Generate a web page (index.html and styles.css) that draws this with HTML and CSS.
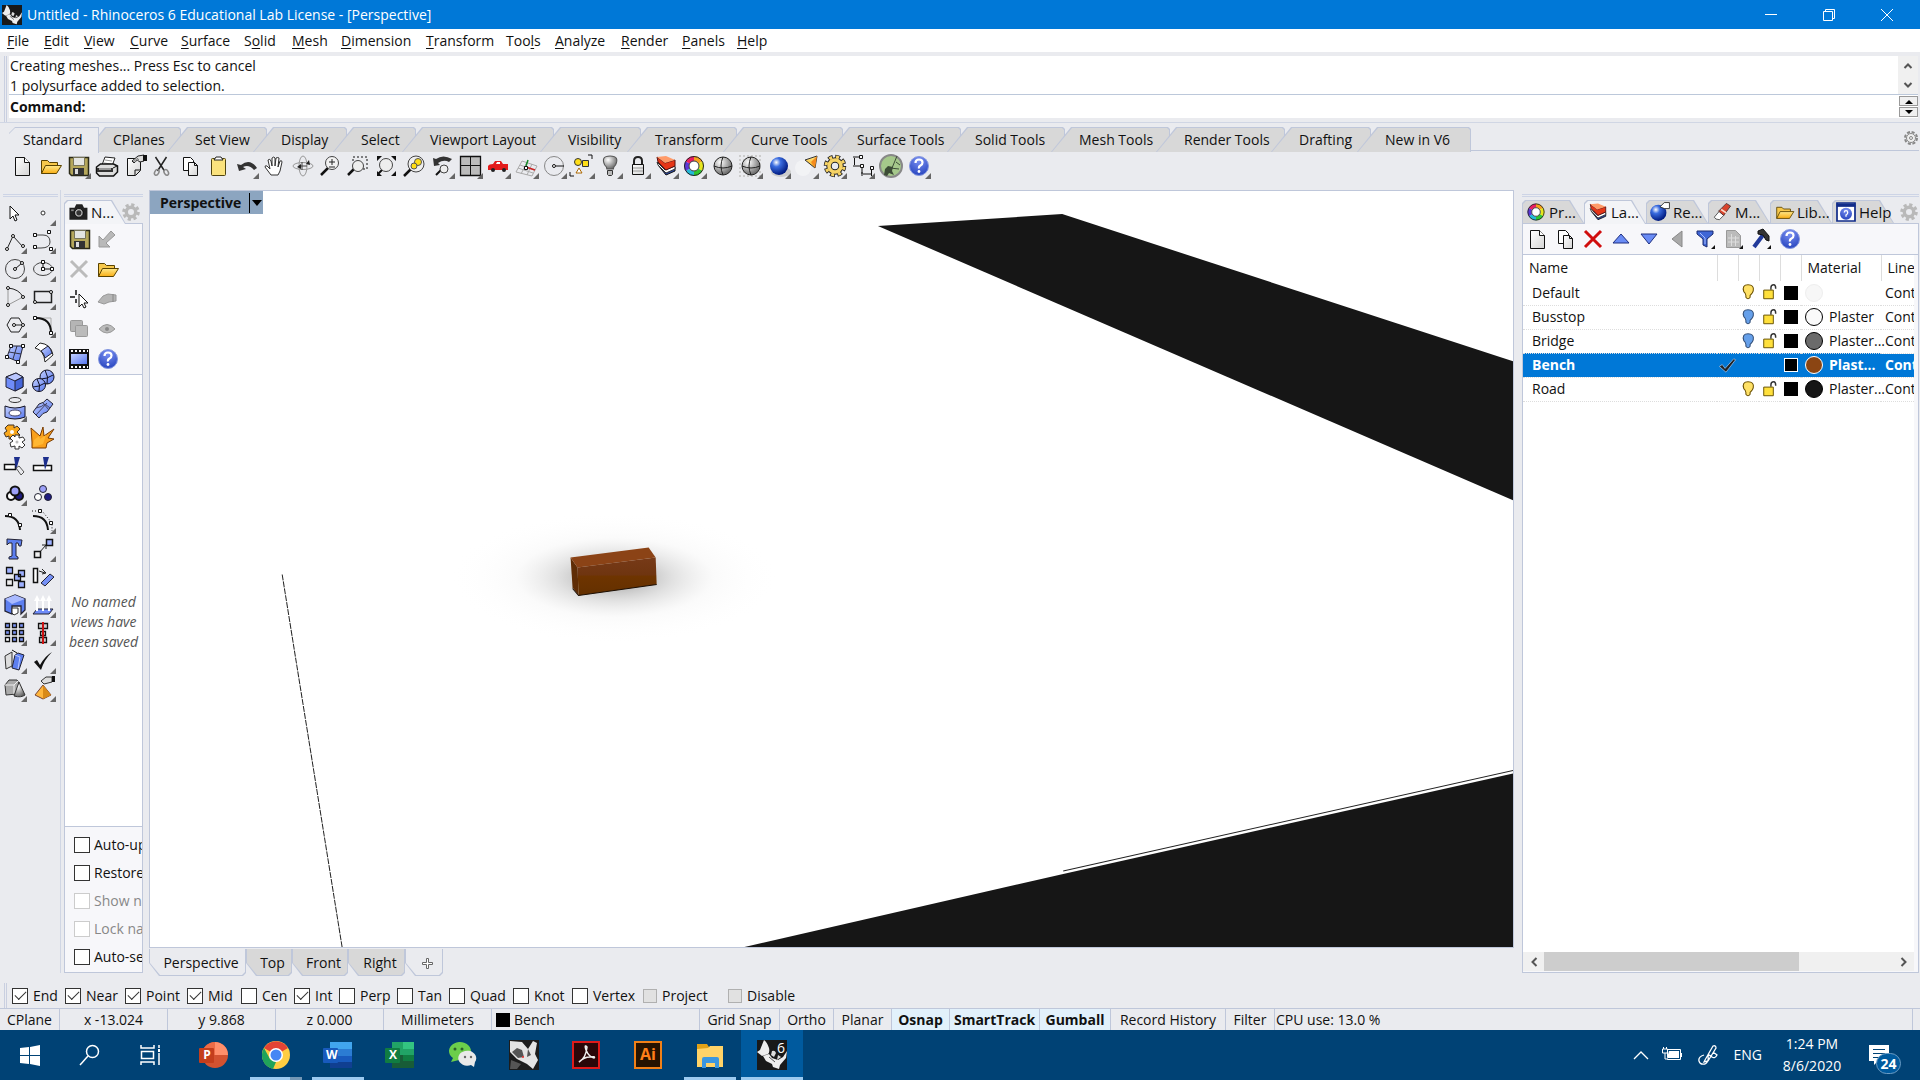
FILE: index.html
```html
<!DOCTYPE html>
<html lang="en">
<head>
<meta charset="utf-8">
<title>Untitled - Rhinoceros 6 Educational Lab License - [Perspective]</title>
<link rel="stylesheet" href="styles.css">
</head>
<body>
<svg class="sprite" width="0" height="0" aria-hidden="true">
<defs>
<linearGradient id="gPage" x1="0" y1="0" x2="1" y2="1"><stop offset="0" stop-color="#fff"/><stop offset="1" stop-color="#d4d4d4"/></linearGradient>
<linearGradient id="gFold" x1="0" y1="0" x2="0" y2="1"><stop offset="0" stop-color="#ffe98a"/><stop offset="1" stop-color="#f9ae14"/></linearGradient>
<linearGradient id="gBlue" x1="0" y1="0" x2="1" y2="1"><stop offset="0" stop-color="#c3d0ff"/><stop offset="1" stop-color="#5878ee"/></linearGradient>
<radialGradient id="gHelp" cx=".5" cy=".2" r=".9"><stop offset="0" stop-color="#7c92f4"/><stop offset="1" stop-color="#1e3cb8"/></radialGradient>
<radialGradient id="gBall" cx=".35" cy=".3" r=".7"><stop offset="0" stop-color="#fff"/><stop offset=".35" stop-color="#3a6ce0"/><stop offset="1" stop-color="#001a80"/></radialGradient>
<radialGradient id="gGrey" cx=".35" cy=".3" r=".8"><stop offset="0" stop-color="#fff"/><stop offset="1" stop-color="#555"/></radialGradient>
<radialGradient id="gShade"><stop offset="0" stop-color="#000" stop-opacity=".75"/><stop offset=".35" stop-color="#555" stop-opacity=".32"/><stop offset=".6" stop-color="#999" stop-opacity=".08"/><stop offset="1" stop-color="#fff" stop-opacity="0"/></radialGradient>
<linearGradient id="gFront" x1="0" y1="0" x2="0" y2="1"><stop offset="0" stop-color="#773a18"/><stop offset=".45" stop-color="#6f3510"/><stop offset=".5" stop-color="#6e3400"/><stop offset="1" stop-color="#633000"/></linearGradient>
</defs>
<symbol id="new" viewBox="0 0 28 28"><path d="M7.500 5.500h9l5 5v13h-14z" fill="url(#gPage)" stroke="#111"/><path d="M16.500 5.500v5h5" fill="#fff" stroke="#111"/></symbol>
<symbol id="open" viewBox="0 0 28 28"><path d="M5.500 21.500v-13h6l2 2h8v3" fill="#f7c84b" stroke="#5a4300"/><path d="M5.500 21.500l4-8h16l-5 8z" fill="url(#gFold)" stroke="#5a4300"/></symbol>
<symbol id="save" viewBox="0 0 28 28"><path d="M5.500 5.500h19v18h-17l-2-2z" fill="#b5a75b" stroke="#2b2a18" stroke-width="1.500"/><path d="M9.500 5.500h11v8h-11z" fill="#e4e5e1" stroke="#77745a"/><path d="M9 16h11v7H9z" fill="#333"/><path d="M11 17h3v5h-3z" fill="#ddd"/></symbol>
<symbol id="print" viewBox="0 0 28 28"><path d="M10 13l3-8 10 1-3 8z" fill="#fff" stroke="#222"/><path d="M13 8l7 1M12 11l7 1" stroke="#999"/><path d="M4.500 15l4-3h13l4 2v6l-4 4h-14l-3-3z" fill="#ddd" stroke="#111" stroke-width="1.500"/><path d="M5 16h16v4H5z" fill="#333"/><path d="M7 17h12" stroke="#fff"/><path d="M21 16l4-2" stroke="#111"/></symbol>
<symbol id="props" viewBox="0 0 28 28"><path d="M7.500 6.500h13v12l-5 5h-8z" fill="url(#gPage)" stroke="#111"/><path d="M20 18h-5v5" fill="none" stroke="#111"/><path d="M12 9l6-5 6-1v6l-4 1-3-2-3 3z" fill="#ddd" stroke="#222"/><path d="M23 3h4v6h-4z" fill="#111"/><path d="M13 10l5-4M15 10l4-3" stroke="#777"/></symbol>
<symbol id="cut" viewBox="0 0 28 28"><path d="M7.500 5l9 14M18.500 5l-9 14" stroke="#222" stroke-width="1.500"/><ellipse cx="9" cy="20.500" rx="2" ry="3" transform="rotate(30 9 20)" fill="none" stroke="#888" stroke-width="1.500"/><ellipse cx="18" cy="20.500" rx="2" ry="3" transform="rotate(-30 18 20)" fill="none" stroke="#888" stroke-width="1.500"/></symbol>
<symbol id="copy" viewBox="0 0 28 28"><path d="M7.500 5.500h7l3 3v10h-10z" fill="#fff" stroke="#111"/><path d="M12.500 10.500h6l3 3v10h-9z" fill="url(#gPage)" stroke="#111"/><path d="M18.500 10.500v3h3" fill="none" stroke="#111"/></symbol>
<symbol id="paste" viewBox="0 0 28 28"><rect x="7.500" y="6.500" width="14" height="17" rx="1" fill="#fae27d" stroke="#4f4410"/><path d="M10 8l2-3h5l2 3z" fill="#fff" stroke="#222"/></symbol>
<symbol id="undo" viewBox="0 0 28 28"><path d="M5 12l2 7 7-2-3-2q6-3 11 3l3-2q-7-10-16-3z" fill="#333"/></symbol>
<symbol id="pan" viewBox="0 0 28 28"><path d="M11 23l-6-8q0-2 2-1l3 3-2-9q2-2 3 1l1 5v-8q2-2 3 0v8l1-8q2-1 3 0l-1 9 2-6q2-1 2 1l-2 9-2 4z" fill="#fff" stroke="#333"/></symbol>
<symbol id="orbit" viewBox="0 0 28 28"><ellipse cx="15" cy="14" rx="10" ry="3.500" fill="none" stroke="#999"/><ellipse cx="15" cy="14" rx="4" ry="10" fill="none" stroke="#999"/><path d="M14 10v8M11 14h8" stroke="#444"/><path d="M18 12l3-4 1 5zM13 12v5l-4-2z" fill="#222"/></symbol>
<symbol id="zoom" viewBox="0 0 28 28"><path d="M5 23l7-7" stroke="#111" stroke-width="2.500"/><circle cx="16" cy="11" r="6.500" fill="#f2f2f2" stroke="#444"/><path d="M13 10h6M16 7v6M13 15h6" stroke="#222"/></symbol>
<symbol id="zoomwin" viewBox="0 0 28 28"><path d="M4 23l6-6" stroke="#111" stroke-width="2.500"/><circle cx="14" cy="14" r="5.500" fill="#eee" stroke="#444"/><path d="M9 9V5h14v12h-4" fill="none" stroke="#111" stroke-dasharray="2 2"/></symbol>
<symbol id="zoomext" viewBox="0 0 28 28"><path d="M6 22l5-5" stroke="#111" stroke-width="2"/><circle cx="14" cy="13" r="6.500" fill="#eee" stroke="#444"/><path d="M5 4h5l-5 5zM24 4h-5l5 5zM24 24h-5l5-5zM5 24v-5l5 5z" fill="#111"/></symbol>
<symbol id="zoomsel" viewBox="0 0 28 28"><path d="M4 24l7-7" stroke="#111" stroke-width="2.500"/><circle cx="16" cy="12" r="8" fill="#eee" stroke="#444"/><circle cx="18" cy="10" r="3.500" fill="#ffde17" stroke="#555"/><circle cx="14" cy="14" r="3" fill="#ffde17" stroke="#555"/></symbol>
<symbol id="undoview" viewBox="0 0 28 28"><path d="M5 6l1 8 6-1-2-2q6-4 11-1l3-3q-9-5-16 0z" fill="#333"/><path d="M8 23l5-5" stroke="#111" stroke-width="2"/><circle cx="16" cy="17" r="4" fill="#eee" stroke="#444"/></symbol>
<symbol id="fourview" viewBox="0 0 28 28"><path d="M4.500 4.500h20v19h-20z" fill="#bbb" stroke="#111" stroke-width="1.300"/><path d="M14.500 4v19M4 13.500h20" stroke="#111"/></symbol>
<symbol id="car" viewBox="0 0 28 28"><path d="M4 14q1-2 5-2l2-3h6l2 3h5v6H4z" fill="#e31b1b"/><path d="M12 12l1-2h3v2z" fill="#fff"/><circle cx="9" cy="18" r="2" fill="#222"/><circle cx="20" cy="18" r="2" fill="#222"/></symbol>
<symbol id="cplane" viewBox="0 0 28 28"><path d="M4 20L10 9l15 5-5 10zM6 16l15 5M8 13l14 5M9 22l6-12M15 23l5-11" fill="none" stroke="#aaa"/><path d="M14 15l9 3" stroke="#c22" stroke-width="1.500"/><path d="M14 14l2-6" stroke="#182" stroke-width="1.500"/><path d="M12.500 14.500h3v3h-3z" fill="#fff" stroke="#111"/></symbol>
<symbol id="circledim" viewBox="0 0 28 28"><circle cx="14" cy="14" r="9.500" fill="none" stroke="#888"/><circle cx="14" cy="14" r="1.500" fill="#fff" stroke="#111"/><path d="M16 14h8" stroke="#111"/></symbol>
<symbol id="select" viewBox="0 0 28 28"><circle cx="10" cy="10" r="3.500" fill="#ffde17" stroke="#333"/><path d="M14.500 8.500h6v6h-6z" fill="#ffde17" stroke="#333"/><path d="M8 21l3-5 3 5z" fill="#fff" stroke="#a60"/><path d="M20 3h4v4M2 20v4h4" fill="none" stroke="#111"/></symbol>
<symbol id="bulb" viewBox="0 0 28 28"><path d="M11 17q0-2-2-4-4-9 5-9t5 9q-2 2-2 4z" fill="url(#gGrey)" stroke="#555" transform="translate(-1 0) scale(1.080 1)"/><path d="M11.500 18.500h5v4l-1 1h-3l-1-1z" fill="#bbb" stroke="#333"/></symbol>
<symbol id="lock" viewBox="0 0 28 28"><path d="M10 13V9q0-4 4-4t4 4v4" fill="none" stroke="#222" stroke-width="2"/><path d="M8.500 12.500h11v10h-11z" fill="url(#gPage)" stroke="#111"/><path d="M9 16h10M9 19h10" stroke="#999"/></symbol>
<symbol id="layers" viewBox="0 0 28 28"><path d="M6 13l8 10 9-4v-4z" fill="#2947a8" stroke="#111"/><path d="M5 10l8 8 10-4v3l-9 4-8-8z" fill="#fff" stroke="#333"/><path d="M5 5l8 6 10-3v6l-9 4-8-8z" fill="#e53617" stroke="#511"/><path d="M5 5l9-1 9 4-10 3z" fill="#ff9a68"/></symbol>
<symbol id="wheel" viewBox="0 0 28 28"><g fill="none" stroke-width="4.500"><path d="M14 6.500a7.500 7.500 0 0 1 6.500 3.800" stroke="#f6a11c"/><path d="M20.500 10.300a7.500 7.500 0 0 1 0 7.500" stroke="#e7e71c"/><path d="M20.500 17.800A7.500 7.500 0 0 1 14 21.500" stroke="#2fc52f"/><path d="M14 21.500a7.500 7.500 0 0 1-6.500-3.700" stroke="#23b9d8"/><path d="M7.500 17.800a7.500 7.500 0 0 1 0-7.500" stroke="#5b36d8"/><path d="M7.500 10.300A7.500 7.500 0 0 1 14 6.500" stroke="#e81e62"/></g><circle cx="14" cy="14" r="9.500" fill="none" stroke="#222"/><circle cx="14" cy="14" r="5" fill="#fff" stroke="#333"/></symbol>
<symbol id="globe" viewBox="0 0 28 28"><circle cx="15" cy="14" r="9" fill="url(#gGrey)" stroke="#222"/><path d="M6 14q9 4 18 0M15 5q-4 9 0 18" fill="none" stroke="#222"/></symbol>
<symbol id="globedot" viewBox="0 0 28 28"><path d="M3 4h23M3 8h23M3 12h23M3 16h23M3 20h23M3 24h23" stroke="#ccc" stroke-dasharray="2 2" stroke-width="2"/><circle cx="15" cy="14" r="9" fill="url(#gGrey)" stroke="#222"/><path d="M6 14q9 4 18 0M15 5q-4 9 0 18" fill="none" stroke="#222"/></symbol>
<symbol id="ball" viewBox="0 0 28 28"><ellipse cx="17" cy="20" rx="10" ry="5" fill="#ccc"/><circle cx="15" cy="14" r="9" fill="url(#gBall)"/></symbol>
<symbol id="spot" viewBox="0 0 28 28"><circle cx="11" cy="16" r="8" fill="#fff" opacity=".4"/><path d="M13 8l12-4-2 12z" fill="url(#gFold)" stroke="#333"/><path d="M25 4l-2 12-4-6z" fill="#f58b1c"/></symbol>
<symbol id="gearY" viewBox="0 0 28 28"><g fill="none"><circle cx="15" cy="14" r="9" stroke="#222" stroke-width="4.500" stroke-dasharray="4.600 2.470"/><circle cx="15" cy="14" r="6" stroke="#222" stroke-width="5.500"/><circle cx="15" cy="14" r="9" stroke="#f6d365" stroke-width="3" stroke-dasharray="3 4.070" stroke-dashoffset="-.8"/><circle cx="15" cy="14" r="6" stroke="#f6d365" stroke-width="3.500"/></g></symbol>
<symbol id="gear" viewBox="0 0 28 28"><circle cx="14" cy="14" r="8.500" fill="none" stroke="#b9b9b9" stroke-width="3.500" stroke-dasharray="3.700 2.970"/><circle cx="14" cy="14" r="5.500" fill="none" stroke="#b9b9b9" stroke-width="4"/></symbol>
<symbol id="gearS" viewBox="0 0 28 28"><circle cx="14" cy="14" r="6" fill="none" stroke="#888" stroke-width="2" stroke-dasharray="3 1.700"/><circle cx="14" cy="14" r="4.500" fill="#eee" stroke="#888"/><circle cx="14" cy="14" r="1.500" fill="none" stroke="#888"/></symbol>
<symbol id="dims" viewBox="0 0 28 28"><path d="M5 5h7M5 14h9v8M6.500 6v7M23.500 16v8M15 22h8M14 20v4" fill="none" stroke="#111"/><path d="M11.500 3.500h3v3h-3zM12.500 12.500h3v3h-3zM22.500 14.500h3v3h-3z" fill="#fff" stroke="#111"/></symbol>
<symbol id="hopper" viewBox="0 0 28 28"><circle cx="15" cy="14" r="11" fill="#a5c88b" stroke="#888" stroke-width="2"/><path d="M16 16l5-12M20 10l4 3M14 16l9 1" stroke="#3c4c36"/><path d="M8 23l1-6 3-3 5 1-1 4 2 4-5-2-2 3z" fill="#3c4c36"/></symbol>
<symbol id="help" viewBox="0 0 28 28"><circle cx="15" cy="14" r="9.500" fill="url(#gHelp)" stroke="#8497df"/><path d="M11.500 11q0-3.500 3.500-3.500t3.500 3q0 2-2 3t-1.500 3" fill="none" stroke="#fff" stroke-width="2.200"/><circle cx="15" cy="19.500" r="1.400" fill="#fff"/></symbol>

<symbol id="pointer" viewBox="0 0 28 28"><path d="M10 7v13l3-3 2 5 2-1-2-5h4z" fill="#fff" stroke="#111"/></symbol>
<symbol id="point" viewBox="0 0 28 28"><circle cx="14" cy="14" r="2" fill="#fff" stroke="#333"/></symbol>
<symbol id="polyline" viewBox="0 0 28 28"><path d="M7 22l6-13 10 11" fill="none" stroke="#222"/><g fill="#fff" stroke="#111"><circle cx="7" cy="22" r="1.500"/><circle cx="13" cy="9" r="1.500"/><circle cx="23" cy="19" r="1.500"/></g></symbol>
<symbol id="curve" viewBox="0 0 28 28"><path d="M6 8h8q7 0 7 7 0 6-9 6H6" fill="none" stroke="#444"/><g fill="#fff" stroke="#111"><path d="M4.500 6.500h3v3h-3zM18.500 3.500h3v3h-3zM4.500 18.500h3v3h-3zM20.500 20.500h3v3h-3z"/></g></symbol>
<symbol id="circle" viewBox="0 0 28 28"><circle cx="15" cy="14" r="9.500" fill="none" stroke="#444"/><path d="M15 14l7-6" stroke="#111"/><g fill="#fff" stroke="#111"><circle cx="15" cy="14" r="1.500"/><circle cx="22" cy="8" r="1.500"/></g></symbol>
<symbol id="ellipse" viewBox="0 0 28 28"><ellipse cx="14" cy="14" rx="9.500" ry="6.500" fill="none" stroke="#444"/><path d="M14 7v7h9" fill="none" stroke="#111"/><path d="M12.500 5.500h3v3h-3zM12.500 12.500h3v3h-3zM21.500 12.500h3v3h-3z" fill="#fff" stroke="#111"/></symbol>
<symbol id="arc" viewBox="0 0 28 28"><path d="M8 5q11 1 15 9" fill="none" stroke="#222"/><path d="M23 14L8 22V5" fill="none" stroke="#999"/><g fill="#fff" stroke="#111"><circle cx="8" cy="5" r="1.500"/><circle cx="23" cy="14" r="1.500"/><circle cx="8" cy="22" r="1.500"/></g></symbol>
<symbol id="rect" viewBox="0 0 28 28"><path d="M5.500 8.500h17v11h-17z" fill="none" stroke="#222" stroke-width="1.500"/><g fill="#fff" stroke="#111"><circle cx="22" cy="9" r="1.500"/><circle cx="6" cy="19" r="1.500"/></g></symbol>
<symbol id="polygon" viewBox="0 0 28 28"><path d="M7 14l4-7h8l4 7-4 7h-8zM14 14h9" fill="none" stroke="#222"/><g fill="#fff" stroke="#111"><circle cx="14" cy="14" r="1.500"/><circle cx="23" cy="14" r="1.500"/></g></symbol>
<symbol id="fillet" viewBox="0 0 28 28"><path d="M7 7h15v16" fill="none" stroke="#aaa"/><path d="M7 7q15 0 15 15" fill="none" stroke="#111" stroke-width="2"/><path d="M4.500 5.500h3v3h-3zM20.500 20.500h3v3h-3z" fill="#fff" stroke="#111"/></symbol>
<symbol id="surfpts" viewBox="0 0 28 28"><path d="M11 7h12l-4 16L7 18z" fill="url(#gBlue)" stroke="#223"/><path d="M17 7l-4 13M9 13l12 2" stroke="#334"/><path d="M9.500 5.500h3v3h-3zM21.500 5.500h3v3h-3zM5.500 16.500h3v3h-3zM16.500 21.500h3v3h-3z" fill="#fff" stroke="#111"/></symbol>
<symbol id="sweep" viewBox="0 0 28 28"><path d="M6 9l5-5q11 1 13 12l-8 7q-1-12-10-14z" fill="#fff" stroke="#222"/><path d="M12 12l7-5q3 3 4 7l-7 5q-1-5-4-7z" fill="url(#gBlue)" stroke="#223"/></symbol>
<symbol id="box" viewBox="0 0 28 28"><path d="M6 10l10-4 7 4v10l-8 4-9-4z" fill="#6f8cf8" stroke="#223"/><path d="M6 10l10-4 7 4-8 4z" fill="#b9c6ff" stroke="#223"/><path d="M15 14v10l8-4V10z" fill="#4565d8" stroke="#223"/></symbol>
<symbol id="spheres" viewBox="0 0 28 28"><circle cx="18" cy="10" r="7" fill="url(#gBlue)" stroke="#112"/><path d="M12 12q6 0 12-4M16 3q4 7 2 14" fill="none" stroke="#112"/><circle cx="10" cy="18" r="6.500" fill="url(#gBlue)" stroke="#112"/><path d="M4 20q6 0 12-4M8 12q4 6 2 12" fill="none" stroke="#112"/></symbol>
<symbol id="cylinder" viewBox="0 0 28 28"><ellipse cx="15" cy="5" rx="6" ry="2.500" fill="none" stroke="#333"/><path d="M5 11q10 4 20 0v11q-10 4-20 0z" fill="url(#gBlue)" stroke="#112"/><ellipse cx="15" cy="18" rx="6" ry="3" fill="#fff" stroke="#446"/></symbol>
<symbol id="mesh" viewBox="0 0 28 28"><path d="M4 17l6-8q5-1 8-5l6 5-6 8q-4 0-8 6z" fill="url(#gBlue)" stroke="#223"/><path d="M7 13q6-1 9-4l5 4M14 8l6 7M7 20l11-12" fill="none" stroke="#446"/></symbol>
<symbol id="gears" viewBox="0 0 28 28"><path d="M9 3h5v3l3-2 3 3-3 3 3 3-3 3-3-2v3H9v-3l-3 1-2-4 3-2-2-3 3-3z" fill="#f8a71c" stroke="#432" transform="translate(0 -1)"/><circle cx="12" cy="9" r="2" fill="#fff"/><path d="M15 12h4v3l4-1 2 3-3 2 3 3-3 3-3-2v3h-4v-3l-4 1-1-4 3-2-3-3 3-3 2 2z" fill="#fff" stroke="#333"/><circle cx="17" cy="19" r="1.500" fill="#bbb"/></symbol>
<symbol id="explode" viewBox="0 0 28 28"><path d="M2 5l9 8 3-9 1 9 10-7-6 9 6 1-7 4-1 5H3v-6z" fill="#f9a01b" stroke="#7a3b00"/><path d="M4 24l1-7 5-4 1 3 6-4-3 9z" fill="#ffb732"/></symbol>
<symbol id="trim" viewBox="0 0 28 28"><path d="M4.500 13.500h11v5h-11z" fill="#fff" stroke="#111" stroke-width="1.500"/><path d="M14 6h6l-4 13z" fill="#1d2f8d"/><path d="M16 17l3-2 5 6-3 3z" fill="none" stroke="#555"/></symbol>
<symbol id="split" viewBox="0 0 28 28"><path d="M4.500 14.500h18v5h-18z" fill="#fff" stroke="#111" stroke-width="1.500"/><path d="M14 6h6l-4 13z" fill="#1d2f8d"/></symbol>
<symbol id="join" viewBox="0 0 28 28"><g stroke="#111" stroke-width="2"><circle cx="11" cy="17" r="4" fill="#fff"/><circle cx="19" cy="17" r="4" fill="#1f1c80"/><circle cx="15" cy="12" r="4.500" fill="#9ca0f8"/></g></symbol>
<symbol id="group" viewBox="0 0 28 28"><g stroke="#223"><circle cx="14" cy="10" r="3.500" fill="#9ca0f8"/><circle cx="9" cy="18" r="3.500" fill="#fff"/><circle cx="19" cy="18" r="3.500" fill="#1f1c80"/></g></symbol>
<symbol id="edit1" viewBox="0 0 28 28"><path d="M5 9q14 0 15 14" fill="none" stroke="#111" stroke-width="2"/><path d="M8.500 6.500h3v3h-3zM18.500 16.500h3v3h-3z" fill="#fff" stroke="#111"/></symbol>
<symbol id="edit2" viewBox="0 0 28 28"><path d="M4 9q14 0 15 14" fill="none" stroke="#111" stroke-width="2"/><path d="M3 4h10l10 12v8" fill="none" stroke="#111" stroke-dasharray="1 2"/><path d="M9.500 2.500h3v3h-3zM20.500 14.500h3v3h-3z" fill="#fff" stroke="#111"/></symbol>
<symbol id="text3d" viewBox="0 0 28 28"><path d="M7 4l15 1-1 6h-2l-1-3h-2v13l2 1v2h-9v-2l3-1V8H9l-2 2z" fill="#5d7ff0" stroke="#223"/></symbol>
<symbol id="move" viewBox="0 0 28 28"><path d="M10 18l7-8M13 10h4v4" fill="none" stroke="#222"/><path d="M17.500 4.500h6v6h-6z" fill="#9db0ff" stroke="#111" stroke-width="1.500"/><path d="M5.500 16.500h6v6h-6z" fill="#eee" stroke="#111" stroke-width="1.500"/></symbol>
<symbol id="copyobj" viewBox="0 0 28 28"><g stroke="#111" stroke-width="1.300" fill="#9db0ff"><path d="M6.500 4.500h6v6h-6zM18.500 7.500h6v6h-6zM14.500 11.500h6v6h-6zM18.500 18.500h6v6h-6z"/><path d="M6.500 16.500h6v6h-6z" fill="#eee"/></g></symbol>
<symbol id="rotate" viewBox="0 0 28 28"><path d="M4.500 5.500h4v14h-4z" fill="#fff" stroke="#111" stroke-width="1.500"/><path d="M12 20l9-9 4 3-9 9z" fill="#7590f5" stroke="#223"/><path d="M10 8l6 2M13 6l4 4-4 1" fill="none" stroke="#222"/></symbol>
<symbol id="solidedit" viewBox="0 0 28 28"><path d="M5 8l10-4 10 4v11l-4 4v-8h-9v8l-7-3z" fill="#5d7ff0" stroke="#223" stroke-width="1.300"/><path d="M5 8l10-4 10 4-13 5z" fill="#a9baff"/><path d="M12 17h6v5l-4 2-2-2z" fill="#fff" stroke="#333"/></symbol>
<symbol id="extrude" viewBox="0 0 28 28"><path d="M4 23l4-5h16l-4 5z" fill="#6f8cf8" stroke="#223"/><path d="M8 20V8M14 20V8M20 20V8" stroke="#fff" stroke-width="2"/><path d="M5 10l3-6 3 6zM11 10l3-6 3 6zM17 10l3-6 3 6z" fill="#fff"/></symbol>
<symbol id="array" viewBox="0 0 28 28"><g stroke="#111" stroke-width="1.300" fill="#7b93f4"><path d="M5.500 4.500h4v4h-4zM12.500 4.500h4v4h-4zM19.500 4.500h4v4h-4zM5.500 11.500h4v4h-4zM12.500 11.500h4v4h-4zM19.500 11.500h4v4h-4zM12.500 18.500h4v4h-4zM19.500 18.500h4v4h-4z"/><path d="M5.500 18.500h4v4h-4z" fill="#fff"/></g></symbol>
<symbol id="align" viewBox="0 0 28 28"><path d="M9.500 4.500h9v5h-9zM11.500 12.500h5v4h-5zM10.500 18.500h7v5h-7z" fill="#ccc" stroke="#111" stroke-width="1.300"/><path d="M14 3v22" stroke="#c11" stroke-width="2"/></symbol>
<symbol id="flow" viewBox="0 0 28 28"><path d="M5 9l7-4v14l-6 3z" fill="#ddd" stroke="#333"/><path d="M15 8l3-2 6 2-5 15-7-2z" fill="#5d7ff0" stroke="#223"/><path d="M15 8l5 2-2 12" fill="none" stroke="#b9c8ff"/><path d="M12 3l5 3" stroke="#111"/></symbol>
<symbol id="check" viewBox="0 0 28 28"><path d="M5 15l3-2 3 5q5-9 12-13-8 8-11 18z" fill="#111"/></symbol>
<symbol id="greybox" viewBox="0 0 28 28"><path d="M5 10l4-5h8l2 3-2 11-11 1z" fill="#aaa" stroke="#333"/><path d="M5 10h9l4-4M14 10v9" fill="none" stroke="#eee"/><path d="M19 7l6 13q-4 3-11 1z" fill="url(#gGrey)" stroke="#333"/></symbol>
<symbol id="pyramid" viewBox="0 0 28 28"><path d="M6 20l8-10 8 10-8 4z" fill="#ffb63d" stroke="#743"/><path d="M14 10v14l8-4z" fill="#d98a18"/><path d="M12 6l5-4h6v5l-8 2z" fill="#ddd" stroke="#333"/><path d="M23 1h3v6h-3z" fill="#111"/></symbol>

<symbol id="camera" viewBox="0 0 28 28"><path d="M4 9h6l2-4h7l2 4h4v14H4z" fill="#222"/><circle cx="15" cy="15" r="5" fill="#bbb" stroke="#000"/><circle cx="15" cy="15" r="3" fill="#333"/><path d="M6 11h3v2H6z" fill="#888"/></symbol>
<symbol id="import" viewBox="0 0 28 28"><path d="M6 22v-11l4 4 8-9 4 4-9 8 4 4z" fill="#b9b9b9" stroke="#999"/></symbol>
<symbol id="xgrey" viewBox="0 0 28 28"><path d="M6 6l16 16M22 6L6 22" stroke="#bbb" stroke-width="3"/></symbol>
<symbol id="xred" viewBox="0 0 28 28"><path d="M6 6l16 16M22 6L6 22" stroke="#d00d0d" stroke-width="3"/></symbol>
<symbol id="pick" viewBox="0 0 28 28"><path d="M5 12h5M11 5v5M11 14v4" stroke="#111" stroke-width="1.500"/><path d="M14 9v13l3-3 2 4 2-1-2-4h4z" fill="#fff" stroke="#111"/></symbol>
<symbol id="handgrey" viewBox="0 0 28 28"><path d="M5 17l5-6 5-2 8 1v6l-7 1-5 2z" fill="#b5b5b5" stroke="#999"/><path d="M20 9v8" stroke="#888"/></symbol>
<symbol id="copygrey" viewBox="0 0 28 28"><rect x="5.500" y="5.500" width="12" height="11" rx="1" fill="#b5b5b5" stroke="#999"/><rect x="10.500" y="10.500" width="12" height="11" rx="1" fill="#bbb" stroke="#999"/></symbol>
<symbol id="eye" viewBox="0 0 28 28"><path d="M6 14q8-9 16 0-8 8-16 0z" fill="#bbb" stroke="#999"/><circle cx="14" cy="14" r="2" fill="#888"/></symbol>
<symbol id="film" viewBox="0 0 28 28"><path d="M4 4h20v20H4z" fill="#111"/><path d="M6 6h17M6 22h17" stroke="#fff" stroke-width="2" stroke-dasharray="2 2"/><path d="M6 9h16v10H6z" fill="url(#gBlue)"/></symbol>
<symbol id="brush" viewBox="0 0 28 28"><path d="M5 20l6-7 5 5-5 5q-5 0-6-3z" fill="#fff" stroke="#444"/><path d="M10 13l9-9 5 3-8 11z" fill="#d8442c" stroke="#433"/><path d="M13 11l6 4" stroke="#f9d9c8" stroke-width="2"/></symbol>
<symbol id="render" viewBox="0 0 28 28"><circle cx="12" cy="15" r="9.500" fill="url(#gBall)"/><path d="M14 8l5-5h6v7h-6z" fill="#fff" stroke="#222"/></symbol>
<symbol id="helpwin" viewBox="0 0 28 28"><path d="M3.500 3.500h21v21h-21z" fill="#fff" stroke="#112c8a" stroke-width="2"/><path d="M3 4h22v4H3z" fill="#112c8a"/><circle cx="14" cy="16" r="7" fill="url(#gHelp)"/><path d="M12 14.500q0-2 2-2t2 2-2 3v2" fill="none" stroke="#fff" stroke-width="1.500"/></symbol>
<symbol id="up" viewBox="0 0 28 28"><path d="M6 18h16l-8-9z" fill="#6a8cf5" stroke="#1f2f80"/></symbol>
<symbol id="down" viewBox="0 0 28 28"><path d="M6 9h16l-8 10z" fill="#6a8cf5" stroke="#1f2f80"/></symbol>
<symbol id="left" viewBox="0 0 28 28"><path d="M9 14l10-8v16z" fill="#a9a9a9" stroke="#888"/></symbol>
<symbol id="filter" viewBox="0 0 28 28"><path d="M6 6h16v3l-6 5v8l-4-2v-6L6 9z" fill="#3f66d6" stroke="#1b2b70"/><path d="M9 8l5 5v6" fill="none" stroke="#a8bcff"/></symbol>
<symbol id="sheet" viewBox="0 0 28 28"><path d="M7.500 5.500h9l5 5v12h-14z" fill="#bbb" stroke="#999"/><path d="M9 13h11M9 17h11M12.500 9v12M16.500 11v10" stroke="#ddd"/></symbol>
<symbol id="hammer" viewBox="0 0 28 28"><path d="M7 22l9-12" stroke="#223a9a" stroke-width="4"/><path d="M11 6l5-2 6 7v5l-3-1-3-5-5-1z" fill="#333" stroke="#111"/></symbol>

<symbol id="bulbY" viewBox="0 0 20 24"><path d="M8 15q0-2-2-4-2-7 4-7t5 6q0 2-3 5v2q-2 3-4 0z" fill="#ffe166" stroke="#6b5000" transform="translate(-1 0) scale(1.100 1)"/></symbol>
<symbol id="bulbB" viewBox="0 0 20 24"><path d="M8 15q0-2-2-4-2-7 4-7t5 6q0 2-3 5v2q-2 3-4 0z" fill="#66a0ea" stroke="#334f78" transform="translate(-1 0) scale(1.100 1)"/></symbol>
<symbol id="unlock" viewBox="0 0 20 24"><path d="M12 9V7q0-3 3-3 2 0 2 4" fill="none" stroke="#333" stroke-width="1.500"/><path d="M4.500 9.500h10v9h-10z" fill="#ffe03c" stroke="#665200"/></symbol>
<symbol id="tick" viewBox="0 0 20 24"><path d="M2 13l3-2 3 4 9-10 2 1L9 19z" fill="#222" stroke="#9bbfe8" stroke-width=".8"/></symbol>

<symbol id="rhino" viewBox="0 0 30 30"><path d="M0 0h30v30H0z" fill="#191919"/><path d="M3 10L7 0q3 2 5 8 1 4-1 6l-6 2-5-4zM6 16l6-2 3 4 6 2 5-3 4-6-1 7-6 7-1 4-6-2-1-3-6-3z" fill="#eee"/><path d="M15 11q3-1 4 2l-2 4-3-2zM21 15l3 2-4 3" fill="#ddd"/><path d="M12 17l6 5" stroke="#555"/></symbol>
<symbol id="rhino5" viewBox="0 0 30 30"><path d="M0 0h30v30H0z" fill="#1c1c1c"/><path d="M1 1l12 1 6 7 5-8 4 2-2 11 3 6-5 9-6-5-10-5-7-7z" fill="#e4e4e4"/><path d="M8 8l5 2 2 7-6 1-6-6zM19 9l3 6-4 2zM2 20l10 4-4 5H1z" fill="#555"/><circle cx="14" cy="17" r="1" fill="#e33"/></symbol>
<symbol id="win" viewBox="0 0 24 24"><path d="M2 5l9-1v8H2zM12 4l10-2v10H12zM2 13h9v8l-9-1zM12 13h10v10l-10-2z" fill="#fff"/></symbol>
<symbol id="search" viewBox="0 0 24 24"><circle cx="14.500" cy="8.500" r="6" fill="none" stroke="#fff" stroke-width="1.500"/><path d="M10 13l-8 9" stroke="#fff" stroke-width="1.500"/></symbol>
<symbol id="task" viewBox="0 0 24 24"><path d="M3 2v3h13V2M3 22v-3h13v3M3.500 8.500h12v7h-12zM21 2v3M21 10v12" fill="none" stroke="#fff" stroke-width="1.500"/><path d="M20 6h2v3h-2z" fill="#fff"/></symbol>
<symbol id="chrome" viewBox="0 0 30 30"><circle cx="15" cy="15" r="14" fill="#ffcd42"/><path d="M15 15L3 8A14 14 0 0 1 27 8z" fill="#e24335"/><path d="M3 8l6 11 6 3-3 7A14 14 0 0 1 3 8z" fill="#20a35a"/><circle cx="15" cy="15" r="7" fill="#fff"/><circle cx="15" cy="15" r="5.500" fill="#4687f4"/></symbol>
<symbol id="ppt" viewBox="0 0 30 30"><circle cx="16" cy="15" r="13" fill="#d35230"/><path d="M16 2a13 13 0 0 1 13 13H16z" fill="#ff8f6b"/><path d="M3 15A13 13 0 0 1 16 2v13z" fill="#ed6c47"/><rect x="0" y="8" width="15" height="15" rx="1" fill="#c43e1c"/></symbol>
<symbol id="word" viewBox="0 0 30 30"><path d="M7 2h22v7H7z" fill="#41a5ee"/><path d="M7 9h22v7H7z" fill="#2b7cd3"/><path d="M7 16h22v6H7z" fill="#185abd"/><path d="M7 22h22v6H7z" fill="#103f91"/><rect x="0" y="8" width="15" height="15" rx="1" fill="#185abd"/></symbol>
<symbol id="excel" viewBox="0 0 30 30"><path d="M7 2h11v13H7z" fill="#21a366"/><path d="M18 2h11v7H18z" fill="#33c481"/><path d="M18 9h11v6H18z" fill="#21a366"/><path d="M7 15h22v13H7z" fill="#185c37"/><path d="M18 15h11v6H18z" fill="#107c41"/><rect x="0" y="8" width="15" height="15" rx="1" fill="#107c41"/></symbol>
<symbol id="wechat" viewBox="0 0 30 30"><path d="M4 22l2-4a11 9 0 1 1 6 2z" fill="#6cce4b"/><circle cx="8" cy="9" r="1.500" fill="#2b5f2b"/><circle cx="15" cy="9" r="1.500" fill="#2b5f2b"/><path d="M27 27l-3-2a9 7.500 0 1 1 4-3z" fill="#e9e9e9"/><circle cx="18" cy="17" r="1.200" fill="#666"/><circle cx="24" cy="17" r="1.200" fill="#666"/></symbol>
<symbol id="acrobat" viewBox="0 0 30 30"><path d="M2 2h26v26H2z" fill="#2a0709" stroke="#df1b1b" stroke-width="2"/><path d="M8 22q7-4 8-15-3-3-1 3 3 7 8 8 2-2-4-1-6 0-11 5z" fill="none" stroke="#eee" stroke-width="1.500"/></symbol>
<symbol id="ai" viewBox="0 0 30 30"><path d="M2 2h26v26H2z" fill="#261300" stroke="#f08018" stroke-width="2"/></symbol>
<symbol id="folder" viewBox="0 0 30 30"><path d="M2 4h10l2 3h14v20H2z" fill="#e0a117"/><path d="M2 9l11-1 2-2h13v21H2z" fill="#ffd368"/><path d="M7 28v-9q0-2 2-2h13q2 0 2 2v9h-4v-5h-9v5z" fill="#3b97e0"/></symbol>
</svg>

<div class="app">
<header class="titlebar">
  <svg class="app-icon"><use href="#rhino"/></svg>
  <h1 class="title">Untitled - Rhinoceros 6 Educational Lab License - [Perspective]</h1>
  <div class="caption">
    <button aria-label="Minimize"><svg viewBox="0 0 14 14"><path d="M1 6.500h12" stroke="#fff"/></svg></button>
    <button aria-label="Restore"><svg viewBox="0 0 14 14"><path d="M1.500 3.500h9v9h-9zM3.500 3V1.500h9v9H11" fill="none" stroke="#fff"/></svg></button>
    <button aria-label="Close"><svg viewBox="0 0 14 14"><path d="M1 1l12 12M13 1L1 13" stroke="#fff"/></svg></button>
  </div>
</header>

<nav class="menubar" aria-label="Menu">
  <button><u>F</u>ile</button><button><u>E</u>dit</button><button><u>V</u>iew</button><button><u>C</u>urve</button><button><u>S</u>urface</button><button>S<u>o</u>lid</button><button><u>M</u>esh</button><button><u>D</u>imension</button><button><u>T</u>ransform</button><button>Too<u>l</u>s</button><button><u>A</u>nalyze</button><button><u>R</u>ender</button><button><u>P</u>anels</button><button><u>H</u>elp</button>
</nav>

<section class="command">
  <div class="history">
    <div class="history-text"><p>Creating meshes... Press Esc to cancel</p><p>1 polysurface added to selection.</p></div>
    <div class="history-scroll">
      <button aria-label="Scroll up"><svg viewBox="0 0 10 8"><path d="M1.500 6L5 2.500 8.500 6" fill="none" stroke="#555" stroke-width="2"/></svg></button>
      <button aria-label="Scroll down"><svg viewBox="0 0 10 8"><path d="M1.500 2L5 5.500 8.500 2" fill="none" stroke="#555" stroke-width="2"/></svg></button>
    </div>
  </div>
  <div class="prompt">
    <label for="cmd">Command:</label><input id="cmd" type="text">
    <div class="spin"><button aria-label="Previous command"><svg viewBox="0 0 8 5"><path d="M0 5l4-4 4 4z"/></svg></button><button aria-label="Next command"><svg viewBox="0 0 8 5"><path d="M0 0l4 4 4-4z"/></svg></button></div>
  </div>
</section>

<section class="ribbon">
  <div class="tabs">
    <button class="tab on">Standard</button><button class="tab">CPlanes</button><button class="tab">Set View</button><button class="tab">Display</button><button class="tab">Select</button><button class="tab">Viewport Layout</button><button class="tab">Visibility</button><button class="tab">Transform</button><button class="tab">Curve Tools</button><button class="tab">Surface Tools</button><button class="tab">Solid Tools</button><button class="tab">Mesh Tools</button><button class="tab">Render Tools</button><button class="tab">Drafting</button><button class="tab">New in V6</button>
    <button class="options" aria-label="Toolbar options"><svg class="ic"><use href="#gearS"/></svg></button>
  </div>
  <div class="toolbar">
    <button class="tool" aria-label="New"><svg class="ic"><use href="#new"/></svg></button>
    <button class="tool" aria-label="Open"><svg class="ic"><use href="#open"/></svg></button>
    <button class="tool more" aria-label="Save"><svg class="ic"><use href="#save"/></svg></button>
    <button class="tool" aria-label="Print"><svg class="ic"><use href="#print"/></svg></button>
    <button class="tool" aria-label="Document properties"><svg class="ic"><use href="#props"/></svg></button>
    <button class="tool" aria-label="Cut"><svg class="ic"><use href="#cut"/></svg></button>
    <button class="tool" aria-label="Copy"><svg class="ic"><use href="#copy"/></svg></button>
    <button class="tool" aria-label="Paste"><svg class="ic"><use href="#paste"/></svg></button>
    <button class="tool more" aria-label="Undo"><svg class="ic"><use href="#undo"/></svg></button>
    <button class="tool" aria-label="Pan"><svg class="ic"><use href="#pan"/></svg></button>
    <button class="tool" aria-label="Rotate view"><svg class="ic"><use href="#orbit"/></svg></button>
    <button class="tool" aria-label="Zoom dynamic"><svg class="ic"><use href="#zoom"/></svg></button>
    <button class="tool" aria-label="Zoom window"><svg class="ic"><use href="#zoomwin"/></svg></button>
    <button class="tool" aria-label="Zoom extents"><svg class="ic"><use href="#zoomext"/></svg></button>
    <button class="tool" aria-label="Zoom selected"><svg class="ic"><use href="#zoomsel"/></svg></button>
    <button class="tool more" aria-label="Undo view change"><svg class="ic"><use href="#undoview"/></svg></button>
    <button class="tool more" aria-label="Four viewports"><svg class="ic"><use href="#fourview"/></svg></button>
    <button class="tool more" aria-label="Set view"><svg class="ic"><use href="#car"/></svg></button>
    <button class="tool more" aria-label="Set CPlane"><svg class="ic"><use href="#cplane"/></svg></button>
    <button class="tool more" aria-label="Object snap"><svg class="ic"><use href="#circledim"/></svg></button>
    <button class="tool more" aria-label="Select"><svg class="ic"><use href="#select"/></svg></button>
    <button class="tool more" aria-label="Hide"><svg class="ic"><use href="#bulb"/></svg></button>
    <button class="tool more" aria-label="Lock"><svg class="ic"><use href="#lock"/></svg></button>
    <button class="tool more" aria-label="Layers"><svg class="ic"><use href="#layers"/></svg></button>
    <button class="tool more" aria-label="Properties"><svg class="ic"><use href="#wheel"/></svg></button>
    <button class="tool" aria-label="Shade"><svg class="ic"><use href="#globe"/></svg></button>
    <button class="tool more" aria-label="Shade selected"><svg class="ic"><use href="#globedot"/></svg></button>
    <button class="tool more" aria-label="Render"><svg class="ic"><use href="#ball"/></svg></button>
    <button class="tool more" aria-label="Lights"><svg class="ic"><use href="#spot"/></svg></button>
    <button class="tool more" aria-label="Options"><svg class="ic"><use href="#gearY"/></svg></button>
    <button class="tool more" aria-label="Dimensions"><svg class="ic"><use href="#dims"/></svg></button>
    <button class="tool" aria-label="Grasshopper"><svg class="ic"><use href="#hopper"/></svg></button>
    <button class="tool more" aria-label="Help"><svg class="ic"><use href="#help"/></svg></button>
  </div>
</section>

<main class="workspace">
  <aside class="toolbox">
    <div class="grip"></div>
    <div class="toolgrid">
      <button class="tool" aria-label="Pointer"><svg class="ic"><use href="#pointer"/></svg></button>
      <button class="tool more" aria-label="Point"><svg class="ic"><use href="#point"/></svg></button>
      <button class="tool more" aria-label="Polyline"><svg class="ic"><use href="#polyline"/></svg></button>
      <button class="tool more" aria-label="Curve"><svg class="ic"><use href="#curve"/></svg></button>
      <button class="tool more" aria-label="Circle"><svg class="ic"><use href="#circle"/></svg></button>
      <button class="tool more" aria-label="Ellipse"><svg class="ic"><use href="#ellipse"/></svg></button>
      <button class="tool more" aria-label="Arc"><svg class="ic"><use href="#arc"/></svg></button>
      <button class="tool more" aria-label="Rectangle"><svg class="ic"><use href="#rect"/></svg></button>
      <button class="tool more" aria-label="Polygon"><svg class="ic"><use href="#polygon"/></svg></button>
      <button class="tool more" aria-label="Fillet"><svg class="ic"><use href="#fillet"/></svg></button>
      <button class="tool more" aria-label="Surface from points"><svg class="ic"><use href="#surfpts"/></svg></button>
      <button class="tool more" aria-label="Sweep"><svg class="ic"><use href="#sweep"/></svg></button>
      <button class="tool more" aria-label="Box"><svg class="ic"><use href="#box"/></svg></button>
      <button class="tool more" aria-label="Boolean union"><svg class="ic"><use href="#spheres"/></svg></button>
      <button class="tool more" aria-label="Project curves"><svg class="ic"><use href="#cylinder"/></svg></button>
      <button class="tool more" aria-label="Mesh"><svg class="ic"><use href="#mesh"/></svg></button>
      <button class="tool" aria-label="Join"><svg class="ic"><use href="#gears"/></svg></button>
      <button class="tool" aria-label="Explode"><svg class="ic"><use href="#explode"/></svg></button>
      <button class="tool" aria-label="Trim"><svg class="ic"><use href="#trim"/></svg></button>
      <button class="tool" aria-label="Split"><svg class="ic"><use href="#split"/></svg></button>
      <button class="tool more" aria-label="Group"><svg class="ic"><use href="#join"/></svg></button>
      <button class="tool" aria-label="Ungroup"><svg class="ic"><use href="#group"/></svg></button>
      <button class="tool" aria-label="Edit points"><svg class="ic"><use href="#edit1"/></svg></button>
      <button class="tool more" aria-label="Control points"><svg class="ic"><use href="#edit2"/></svg></button>
      <button class="tool" aria-label="Text object"><svg class="ic"><use href="#text3d"/></svg></button>
      <button class="tool more" aria-label="Move"><svg class="ic"><use href="#move"/></svg></button>
      <button class="tool" aria-label="Copy objects"><svg class="ic"><use href="#copyobj"/></svg></button>
      <button class="tool" aria-label="Rotate"><svg class="ic"><use href="#rotate"/></svg></button>
      <button class="tool more" aria-label="Solid editing"><svg class="ic"><use href="#solidedit"/></svg></button>
      <button class="tool more" aria-label="Extrude"><svg class="ic"><use href="#extrude"/></svg></button>
      <button class="tool more" aria-label="Array"><svg class="ic"><use href="#array"/></svg></button>
      <button class="tool more" aria-label="Align"><svg class="ic"><use href="#align"/></svg></button>
      <button class="tool more" aria-label="Flow"><svg class="ic"><use href="#flow"/></svg></button>
      <button class="tool more" aria-label="Check"><svg class="ic"><use href="#check"/></svg></button>
      <button class="tool more" aria-label="Blocks"><svg class="ic"><use href="#greybox"/></svg></button>
      <button class="tool more" aria-label="Drag mode"><svg class="ic"><use href="#pyramid"/></svg></button>
    </div>
  </aside>

  <aside class="views">
    <div class="grip"></div>
    <div class="dock-tabs">
      <button class="dock-tab on"><svg class="ic"><use href="#camera"/></svg>N...</button>
      <button class="dock-gear" aria-label="Panel options"><svg class="ic"><use href="#gear"/></svg></button>
    </div>
    <div class="views-tools">
      <button aria-label="Save view"><svg class="ic"><use href="#save"/></svg></button><button aria-label="Restore view"><svg class="ic"><use href="#import"/></svg></button>
      <button aria-label="Delete view"><svg class="ic"><use href="#xgrey"/></svg></button><button aria-label="Import view"><svg class="ic"><use href="#open"/></svg></button>
      <button aria-label="Pick"><svg class="ic"><use href="#pick"/></svg></button><button aria-label="Edit view"><svg class="ic"><use href="#handgrey"/></svg></button>
      <button aria-label="Duplicate view"><svg class="ic"><use href="#copygrey"/></svg></button><button aria-label="Show view"><svg class="ic"><use href="#eye"/></svg></button>
      <button aria-label="Animate"><svg class="ic"><use href="#film"/></svg></button><button aria-label="Help"><svg class="ic"><use href="#help"/></svg></button>
    </div>
    <div class="views-list"><p>No named<br>views have<br>been saved</p></div>
    <div class="views-opts">
      <label class="chk"><input type="checkbox">Auto-update</label>
      <label class="chk"><input type="checkbox">Restore CPlane</label>
      <label class="chk off"><input type="checkbox" disabled>Show name</label>
      <label class="chk off"><input type="checkbox" disabled>Lock named</label>
      <label class="chk"><input type="checkbox">Auto-select</label>
    </div>
  </aside>

  <section class="stage">
    <div class="viewport">
      <svg class="scene" viewBox="150 191 1364 755" preserveAspectRatio="xMinYMin slice" role="img" aria-label="Perspective view">
        <path d="M877 226l184-12 453 148v139z" fill="#161616"/>
        <path d="M735 948l327-75 452-101v176z" fill="#161616"/>
        <path d="M1062 870l452-101" stroke="#222"/>
        <path d="M282 574l60 373" stroke="#222" stroke-dasharray="6 1"/>
        <ellipse cx="614" cy="577" rx="165" ry="66" fill="url(#gShade)" opacity=".55"/>
        <path d="M570 557l7 10 1 28-6-8z" fill="#5f2d06"/>
        <path d="M577 567l78-10 1 27-78 11z" fill="url(#gFront)"/>
        <path d="M570 557l78-10 7 10-78 10z" fill="#8b4316"/>
        <path d="M572 588l6 7 78-11" fill="none" stroke="#1a0d02"/>
      </svg>
      <div class="view-name"><button>Perspective</button><button class="drop" aria-label="Viewport menu"><svg viewBox="0 0 10 6"><path d="M0 0h10L5 6z"/></svg></button></div>
    </div>
    <div class="view-tabs">
      <button class="view-tab on">Perspective</button><button class="view-tab">Top</button><button class="view-tab">Front</button><button class="view-tab">Right</button><button class="view-tab on" aria-label="New layout"><svg viewBox="0 0 12 12"><path d="M4.500.5h2v4h4v2h-4v4h-2v-4h-4v-2h4z" fill="#fff" stroke="#666"/></svg></button>
    </div>
  </section>

  <aside class="panel">
    <div class="grip"></div>
    <div class="dock-tabs">
      <button class="dock-tab"><svg class="ic"><use href="#wheel"/></svg>Pr...</button>
      <button class="dock-tab on"><svg class="ic"><use href="#layers"/></svg>La...</button>
      <button class="dock-tab"><svg class="ic"><use href="#render"/></svg>Re...</button>
      <button class="dock-tab"><svg class="ic"><use href="#brush"/></svg>M...</button>
      <button class="dock-tab"><svg class="ic"><use href="#open"/></svg>Lib...</button>
      <button class="dock-tab"><svg class="ic"><use href="#helpwin"/></svg>Help</button>
      <button class="dock-gear" aria-label="Panel options"><svg class="ic"><use href="#gear"/></svg></button>
    </div>
    <div class="panel-body">
      <div class="panel-tools">
        <button class="tool" aria-label="New layer"><svg class="ic"><use href="#new"/></svg></button>
        <button class="tool" aria-label="New sublayer"><svg class="ic"><use href="#copy"/></svg></button>
        <button class="tool" aria-label="Delete"><svg class="ic"><use href="#xred"/></svg></button>
        <button class="tool" aria-label="Move up"><svg class="ic"><use href="#up"/></svg></button>
        <button class="tool" aria-label="Move down"><svg class="ic"><use href="#down"/></svg></button>
        <button class="tool" aria-label="Move out"><svg class="ic"><use href="#left"/></svg></button>
        <button class="tool more" aria-label="Filter"><svg class="ic"><use href="#filter"/></svg></button>
        <button class="tool more" aria-label="Layer states"><svg class="ic"><use href="#sheet"/></svg></button>
        <button class="tool more" aria-label="Tools"><svg class="ic"><use href="#hammer"/></svg></button>
        <button class="tool" aria-label="Help"><svg class="ic"><use href="#help"/></svg></button>
      </div>
      <div class="layers-wrap">
      <table class="layers">
        <colgroup><col><col class="c-i"><col class="c-i"><col class="c-i"><col class="c-i"><col class="c-m"><col class="c-l"></colgroup>
        <thead><tr><th>Name</th><th></th><th></th><th></th><th></th><th>Material</th><th>Line</th></tr></thead>
        <tbody>
          <tr><td>Default</td><td></td><td><svg><use href="#bulbY"/></svg></td><td><svg><use href="#unlock"/></svg></td><td><i class="sq"></i></td><td><span class="mat"><i class="dot faint"></i></span></td><td>Conti</td></tr>
          <tr><td>Busstop</td><td></td><td><svg><use href="#bulbB"/></svg></td><td><svg><use href="#unlock"/></svg></td><td><i class="sq"></i></td><td><span class="mat"><i class="dot white"></i>Plaster</span></td><td>Conti</td></tr>
          <tr><td>Bridge</td><td></td><td><svg><use href="#bulbB"/></svg></td><td><svg><use href="#unlock"/></svg></td><td><i class="sq"></i></td><td><span class="mat"><i class="dot grey"></i>Plaster...</span></td><td>Conti</td></tr>
          <tr class="sel"><td>Bench</td><td><svg><use href="#tick"/></svg></td><td></td><td></td><td><i class="sq"></i></td><td><span class="mat"><i class="dot brown"></i>Plast...</span></td><td>Conti</td></tr>
          <tr><td>Road</td><td></td><td><svg><use href="#bulbY"/></svg></td><td><svg><use href="#unlock"/></svg></td><td><i class="sq"></i></td><td><span class="mat"><i class="dot black"></i>Plaster...</span></td><td>Conti</td></tr>
        </tbody>
      </table>
      </div>
      <div class="hscroll">
        <button aria-label="Scroll left"><svg viewBox="0 0 8 10"><path d="M6.500 1L2.500 5l4 4" fill="none" stroke="#555" stroke-width="2"/></svg></button>
        <div class="track"><div class="thumb"></div></div>
        <button aria-label="Scroll right"><svg viewBox="0 0 8 10"><path d="M1.500 1l4 4-4 4" fill="none" stroke="#555" stroke-width="2"/></svg></button>
      </div>
    </div>
  </aside>
</main>

<section class="osnap" aria-label="Object snaps">
  <label class="chk"><input type="checkbox" checked>End</label><label class="chk"><input type="checkbox" checked>Near</label><label class="chk"><input type="checkbox" checked>Point</label><label class="chk"><input type="checkbox" checked>Mid</label><label class="chk"><input type="checkbox">Cen</label><label class="chk"><input type="checkbox" checked>Int</label><label class="chk"><input type="checkbox">Perp</label><label class="chk"><input type="checkbox">Tan</label><label class="chk"><input type="checkbox">Quad</label><label class="chk"><input type="checkbox">Knot</label><label class="chk"><input type="checkbox">Vertex</label><label class="chk flat"><input type="checkbox">Project</label><label class="chk flat"><input type="checkbox">Disable</label>
</section>

<footer class="status">
  <button>CPlane</button><span>x -13.024</span><span>y 9.868</span><span>z 0.000</span><span>Millimeters</span><button class="layer"><i class="sq"></i>Bench</button><button>Grid Snap</button><button>Ortho</button><button>Planar</button><button class="on">Osnap</button><button class="on">SmartTrack</button><button class="on">Gumball</button><button>Record History</button><button>Filter</button><span class="cpu">CPU use: 13.0 %</span>
</footer>

<footer class="taskbar">
  <div class="system">
    <button class="app-btn" aria-label="Start"><svg class="s24"><use href="#win"/></svg></button>
    <button class="app-btn" aria-label="Search"><svg class="s24"><use href="#search"/></svg></button>
    <button class="app-btn" aria-label="Task view"><svg class="s24"><use href="#task"/></svg></button>
  </div>
  <button class="app-btn"><svg class="s30"><use href="#ppt"/></svg><b class="glyph">P</b></button>
  <button class="app-btn run multi" aria-label="Chrome"><svg class="s30"><use href="#chrome"/></svg></button>
  <button class="app-btn run"><svg class="s30"><use href="#word"/></svg><b class="glyph">W</b></button>
  <button class="app-btn"><svg class="s30"><use href="#excel"/></svg><b class="glyph">X</b></button>
  <button class="app-btn" aria-label="WeChat"><svg class="s30"><use href="#wechat"/></svg></button>
  <button class="app-btn" aria-label="Rhinoceros"><svg class="s30"><use href="#rhino5"/></svg></button>
  <button class="app-btn" aria-label="Acrobat"><svg class="s30"><use href="#acrobat"/></svg></button>
  <button class="app-btn"><svg class="s30"><use href="#ai"/></svg><b class="glyph ai">Ai</b></button>
  <button class="app-btn run" aria-label="File Explorer"><svg class="s30"><use href="#folder"/></svg></button>
  <button class="app-btn active"><svg class="s30"><use href="#rhino"/></svg><b class="glyph six">6</b></button>
  <div class="tray">
    <button aria-label="Show hidden icons"><svg class="t-up" viewBox="0 0 16 16"><path d="M1 12l7-7 7 7" fill="none" stroke="#fff" stroke-width="1.300"/></svg></button>
    <button aria-label="Power"><svg class="t-ic" viewBox="0 0 20 20"><path d="M5.500 4.500h13v10h-13zM19.500 8v4" fill="none" stroke="#fff"/><path d="M7 6h10v7H5z" fill="#fff"/><path d="M.5 4h5v4h-5zM1.500 2v2M4.500 2v2M3 8v6h3" fill="#004275" stroke="#fff"/></svg></button>
    <button aria-label="Pen"><svg class="t-ic" viewBox="0 0 20 20"><path d="M7 15l8-14q3-1 3 2l-8 13-4 1zM6 10q-6 2-5 6t6 3q4-2 3-8 1-2 4 1 3 2 5-2l-4-3" fill="none" stroke="#fff" stroke-width="1.300"/></svg></button>
    <button class="lang">ENG</button>
    <button class="clock">1:24 PM<br>8/6/2020</button>
    <button class="notes" aria-label="Notifications"><svg viewBox="0 0 20 20"><path d="M0 0h20v16H9l-4 4v-4H0z" fill="#fff"/><path d="M4 4.500h12M4 8.500h12M4 12.500h6" stroke="#004275"/></svg><span class="badge">24</span></button>
  </div>
</footer>
</div>
</body>
</html>
```
FILE: styles.css
```css
* { box-sizing: border-box; }
body {
  margin: 0;
  font: 14px/20px "Open Sans", "Noto Sans", sans-serif;
  color: #111;
  background: #eaebef;
}
button, input { font: inherit; color: inherit; }
button { padding: 0; border: 0; background: none; white-space: nowrap; }
h1, p { margin: 0; }
.sprite { position: absolute; }
.ic { display: block; flex: none; width: 28px; height: 28px; }
.app { display: flex; flex-direction: column; min-height: 100vh; }

/* title bar */
.titlebar { display: flex; align-items: center; height: 29px; padding-left: 2px; background: #0078d7; color: #fff; }
.app-icon { width: 20px; height: 20px; }
.title { flex: 1; margin-left: 5px; font-size: 14px; font-weight: 400; }
.caption { display: flex; padding-right: 4px; }
.caption button { width: 58px; height: 29px; display: grid; place-items: center; }
.caption svg { width: 14px; height: 14px; }

/* menu */
.menubar {
  display: grid;
  grid-template-columns: 37px 40px 46px 51px 63px 48px 49px 85px 80px 49px 66px 61px 55px 40px;
  height: 23px;
  padding: 1px 0 0 7px;
  background: #fff;
}
.menubar button { text-align: left; }
.menubar u { text-underline-offset: 2px; }

/* command area */
.command { margin: 4px 2px 0 4px; border-left: 3px double #c9cfe0; padding: 0 0 4px 2px; }
.history { display: flex; justify-content: space-between; height: 39px; background: #fff; border-bottom: 1px solid #bcc8da; }
.history-text { padding-left: 1px; line-height: 20px; }
.history-scroll { display: grid; width: 20px; background: #f0f0f0; }
.history-scroll button { display: grid; place-items: center; }
.history-scroll svg { width: 10px; height: 8px; }
.prompt { display: flex; align-items: center; height: 23px; padding-left: 1px; background: #fff; }
.prompt label { font-weight: 700; }
.prompt input { flex: 1; min-width: 0; height: 20px; border: 0; outline: 0; }
.spin { display: grid; gap: 1px; width: 19px; }
.spin button { display: grid; place-items: center; height: 10px; border: 1px solid #999; background: #f0f0f0; }
.spin svg { width: 8px; height: 5px; }

/* toolbar tabs */
.ribbon { border-top: 1px solid #d0d6e4; padding: 4px 1px 3px 9px; }
.tabs {
  display: grid;
  grid-template-columns: 90px 82px 86px 80px 69px 138px 87px 96px 106px 118px 104px 105px 115px 86px 100px 1fr;
  height: 24px;
  border-bottom: 1px solid #bfc7da;
}
.tab { position: relative; z-index: 0; margin-left: -14px; padding-left: 28px; text-align: left; line-height: 22px; }
.tab::before, .tab::after { content: ""; position: absolute; z-index: -1; inset: 0; background: #bfc7da; clip-path: polygon(0 100%, 20px 0, calc(100% - 2px) 0, 100% 2px, 100% 100%); }
.tab::after { inset: 1px 1px 0 1px; background: #d8d8d8; }
.tab.on { z-index: 2; margin: 0 0 -1px; padding-left: 14px; }
.tab.on::before, .tab.on::after { clip-path: polygon(0 100%, 0 6px, 6px 0, 100% 0, 100% 100%); }
.tab.on::after { background: #eaebef; inset: 1px 1px 0 0; }
.options { justify-self: end; width: 20px; }
.options .ic { margin: -3px 0 0 -2px; }
.toolbar { display: flex; margin-left: -1px; padding-top: 1px; padding-bottom: 1px; }
.tool { position: relative; flex: none; width: 28px; height: 28px; }
.more::after { content: ""; position: absolute; right: 1px; bottom: 1px; width: 6px; height: 6px; background: #666; clip-path: polygon(100% 0, 100% 100%, 0 100%); }

/* workspace */
.workspace { flex: 1; display: grid; grid-template-columns: 61px 82px minmax(0, 1fr) 398px; padding: 6px 0 7px; }
.grip { height: 3px; margin: 4px 0 3px; border: solid #cdd4e6; border-width: 1px 0; }
.toolbox { margin-bottom: 3px; border-right: 1px solid #d0d6e4; padding: 0 2px 0 3px; }
.toolgrid { display: grid; grid-template-columns: 28px 28px; column-gap: 1px; margin: -1px 0 0 -3px; }
.views { display: flex; flex-direction: column; min-width: 0; padding: 0 0 3px 3px; }
.dock-tabs { display: flex; height: 24px; position: relative; border-bottom: 1px solid #bfc7da; }
.dock-tab { position: relative; z-index: 0; display: flex; align-items: center; width: 62px; padding-left: 2px; font-size: 15px; }
.dock-tab .ic { width: 24px; height: 24px; margin-right: 1px; }
.dock-tab::before, .dock-tab::after { content: ""; position: absolute; z-index: -1; inset: 0; background: #bfc7da; clip-path: polygon(0 3px, 3px 0, calc(100% - 14px) 0, 100% 100%, 0 100%); }
.dock-tab::after { inset: 1px 1px 0; background: #d8d8d8; }
.dock-tab.on { height: 24px; z-index: 1; }
.dock-tab.on::after { background: #f3f4f7; }
.dock-gear { margin-left: auto; width: 22px; overflow: hidden; }
.dock-gear .ic { width: 24px; height: 24px; }
.views .dock-gear { margin-left: -7px; z-index: 2; }
.views-tools { display: grid; grid-template-columns: 28px 28px; grid-auto-rows: 30px; height: 151px; border: solid #bfc7da; border-width: 0 1px 1px; background: #f7f7fa; }
.views-tools button { display: grid; place-items: center; }
.views-list { flex: 1; display: grid; place-items: center; padding-top: 42px; border: solid #bfc7da; border-width: 0 1px; background: #fff; color: #555; font-style: italic; text-align: center; white-space: nowrap; }
.views-opts { overflow: hidden; height: 147px; padding: 4px 0 0 9px; border: 1px solid #bfc7da; background: #f7f7fa; }
.views-opts .chk { height: 28px; }
.chk { display: flex; align-items: center; gap: 5px; white-space: nowrap; }
.views-opts .chk { gap: 4px; }
.chk input { appearance: none; flex: none; width: 16px; height: 16px; margin: 0; border: 1px solid #333; background: #fff; display: grid; place-items: center; }
.chk input:checked::before { content: ""; width: 10px; height: 5px; margin-top: -3px; border: solid #333; border-width: 0 0 1px 1px; transform: rotate(-45deg); }
.off { color: #888; }
.off input, .chk.off input { border-color: #ccc; }

/* viewport */
.stage { display: flex; flex-direction: column; margin: 0 8px 0 6px; }
.viewport { position: relative; flex: 1; border: 1px solid #bfc7da; background: #fff; overflow: hidden; }
.scene { position: absolute; width: 100%; height: 100%; }
.view-name { position: absolute; display: flex; top: 0; left: 0; height: 23px; padding-left: 10px; background: #8ca5c0; font-weight: 700; }
.drop { display: grid; place-items: center; width: 14px; height: 20px; margin: 2px 0 0 8px; border-left: 1px solid #000; }
.drop svg { width: 10px; height: 6px; }
.view-tabs { display: grid; grid-template-columns: 97px 46px 56px 57px 38px; height: 28px; padding-top: 1px; }
.view-tab { position: relative; z-index: 0; padding-left: 7px; line-height: 26px; }
.view-tab::before, .view-tab::after { content: ""; position: absolute; z-index: -1; inset: 0; background: #bfc7da; clip-path: polygon(0 0, 100% 0, 100% calc(100% - 3px), calc(100% - 3px) 100%, 10px 100%, 0 14px); }
.view-tab::after { inset: 0 1px 1px; background: #d8d8d8; }
.view-tab.on::after { background: #eaebef; }
.view-tab svg { width: 12px; height: 12px; vertical-align: middle; }

/* layers panel */
.panel { display: flex; flex-direction: column; padding: 0 1px 3px 0; }
.panel-body { flex: 1; display: flex; flex-direction: column; border: 1px solid #bfc7da; border-top: 0; padding-right: 4px; background: #f7f7fa; }
.panel-tools { display: flex; height: 31px; padding-top: 1px; margin-right: -4px; border-bottom: 1px solid #bfc7da; }
.panel-tools .more::after { background: #111; width: 4px; height: 4px; bottom: 4px; right: 4px; }
.layers-wrap { flex: 1; background: #fff; }
.layers { width: 100%; table-layout: fixed; border-collapse: collapse; }
.c-i { width: 21px; }
.c-m { width: 80px; }
.c-l { width: 33px; }
.layers th { height: 26px; padding: 0 0 0 6px; text-align: left; font-weight: 400; overflow: hidden; }
.layers th + th { border-left: 1px solid #ddd; }
.layers td { height: 24px; padding: 0; border-bottom: 1px dotted #ddd; white-space: nowrap; }
.layers td:first-child { padding-left: 9px; }
.layers td:last-child { padding-left: 4px; overflow: hidden; }
.layers svg { display: block; width: 20px; height: 23px; }
.sq { display: block; flex: none; width: 14px; height: 14px; background: #000; margin-left: 4px; }
.mat { display: flex; align-items: center; gap: 6px; padding-left: 4px; }
.dot { flex: none; width: 18px; height: 18px; border: 1px solid #000; border-radius: 50%; }
.faint { background: #f7f7f7; border-color: #eee; }
.white { background: #fafafa; }
.grey { background: #6b6b6b; }
.brown { background: #8b4513; }
.black { background: #161616; }
.sel { background: #0078d7; color: #fff; font-weight: 700; }
.sel .sq { border: 1px solid #fff; }
.sel .dot { border-color: #fff; }
.hscroll { display: flex; height: 20px; border-bottom: 1px solid #f7f7fa; background: #f0f0f0; }
.hscroll button { display: grid; place-items: center; width: 21px; }
.hscroll svg { width: 8px; height: 10px; }
.track { flex: 1; }
.thumb { width: 73%; height: 19px; background: #cdcdcd; }

/* object snaps */
.osnap {
  display: grid;
  grid-template-columns: 53px 60px 62px 54px 53px 45px 58px 52px 64px 59px 71px 85px 70px;
  align-items: center;
  height: 25px;
  margin-left: 4px;
  padding-left: 5px;
  border-left: 3px double #c9cfe0;
}
.flat input { width: 14px; height: 14px; background: #e1e1e1; border-color: #b0b0b0; }

/* status bar */
.status {
  display: grid;
  grid-template-columns: 60px 108px 108px 108px 108px 208px 80px 54px 58px 58px 90px 71px 115px 49px 1fr;
  height: 22px;
  border-top: 1px solid #bfc7da;
  line-height: 22px;
  text-align: center;
}
.status > * { border-right: 1px solid #bfc7da; }
.status .on { background: #e2f1fb; font-weight: 700; }
.layer { display: flex; align-items: center; gap: 4px; }
.cpu { margin-right: 7px; padding-left: 1px; text-align: left; }

/* taskbar */
.taskbar { display: flex; height: 50px; background: #004275; color: #fff; }
.system { display: grid; grid-template-columns: 60px 60px 60px; padding-right: 3px; }
.app-btn { position: relative; display: grid; place-items: center; width: 62px; height: 50px; flex: none; }
.system .app-btn { width: 60px; }
.s24 { width: 24px; height: 24px; }
.s30 { width: 30px; height: 30px; }
.run::after { content: ""; position: absolute; bottom: 0; left: 5px; right: 5px; height: 3px; background: #9ccaf0; }
.multi::after { background: linear-gradient(90deg, #9ccaf0 40px, #7397b5 40px); }
.active { background: #005a9e; box-shadow: inset 0 -3px #9ccaf0; }
.glyph { position: absolute; left: 19px; top: 15px; width: 10px; line-height: 20px; font-size: 12px; text-align: center; }
.glyph.ai { left: 20px; width: 22px; top: 14px; font-size: 16px; color: #ff7f18; }
.glyph.six { left: 35px; top: 8px; font-size: 14px; font-weight: 400; }
.tray { display: flex; align-items: center; margin-left: auto; padding-right: 29px; }
.t-up { display: block; width: 16px; height: 16px; margin-right: 13px; }
.t-ic { display: block; width: 20px; height: 20px; margin-right: 16px; }
.lang { margin-right: 19px; }
.clock { width: 62px; line-height: 22px; text-align: center; }
.notes { position: relative; width: 22px; margin-left: 26px; }
.notes svg { display: block; width: 20px; height: 20px; }
.badge { position: absolute; left: 7px; top: 8px; width: 25px; height: 21px; border: 1px solid #6a9cc4; border-radius: 11px; background: #005a9e; font-weight: 700; line-height: 19px; text-align: center; }
```
